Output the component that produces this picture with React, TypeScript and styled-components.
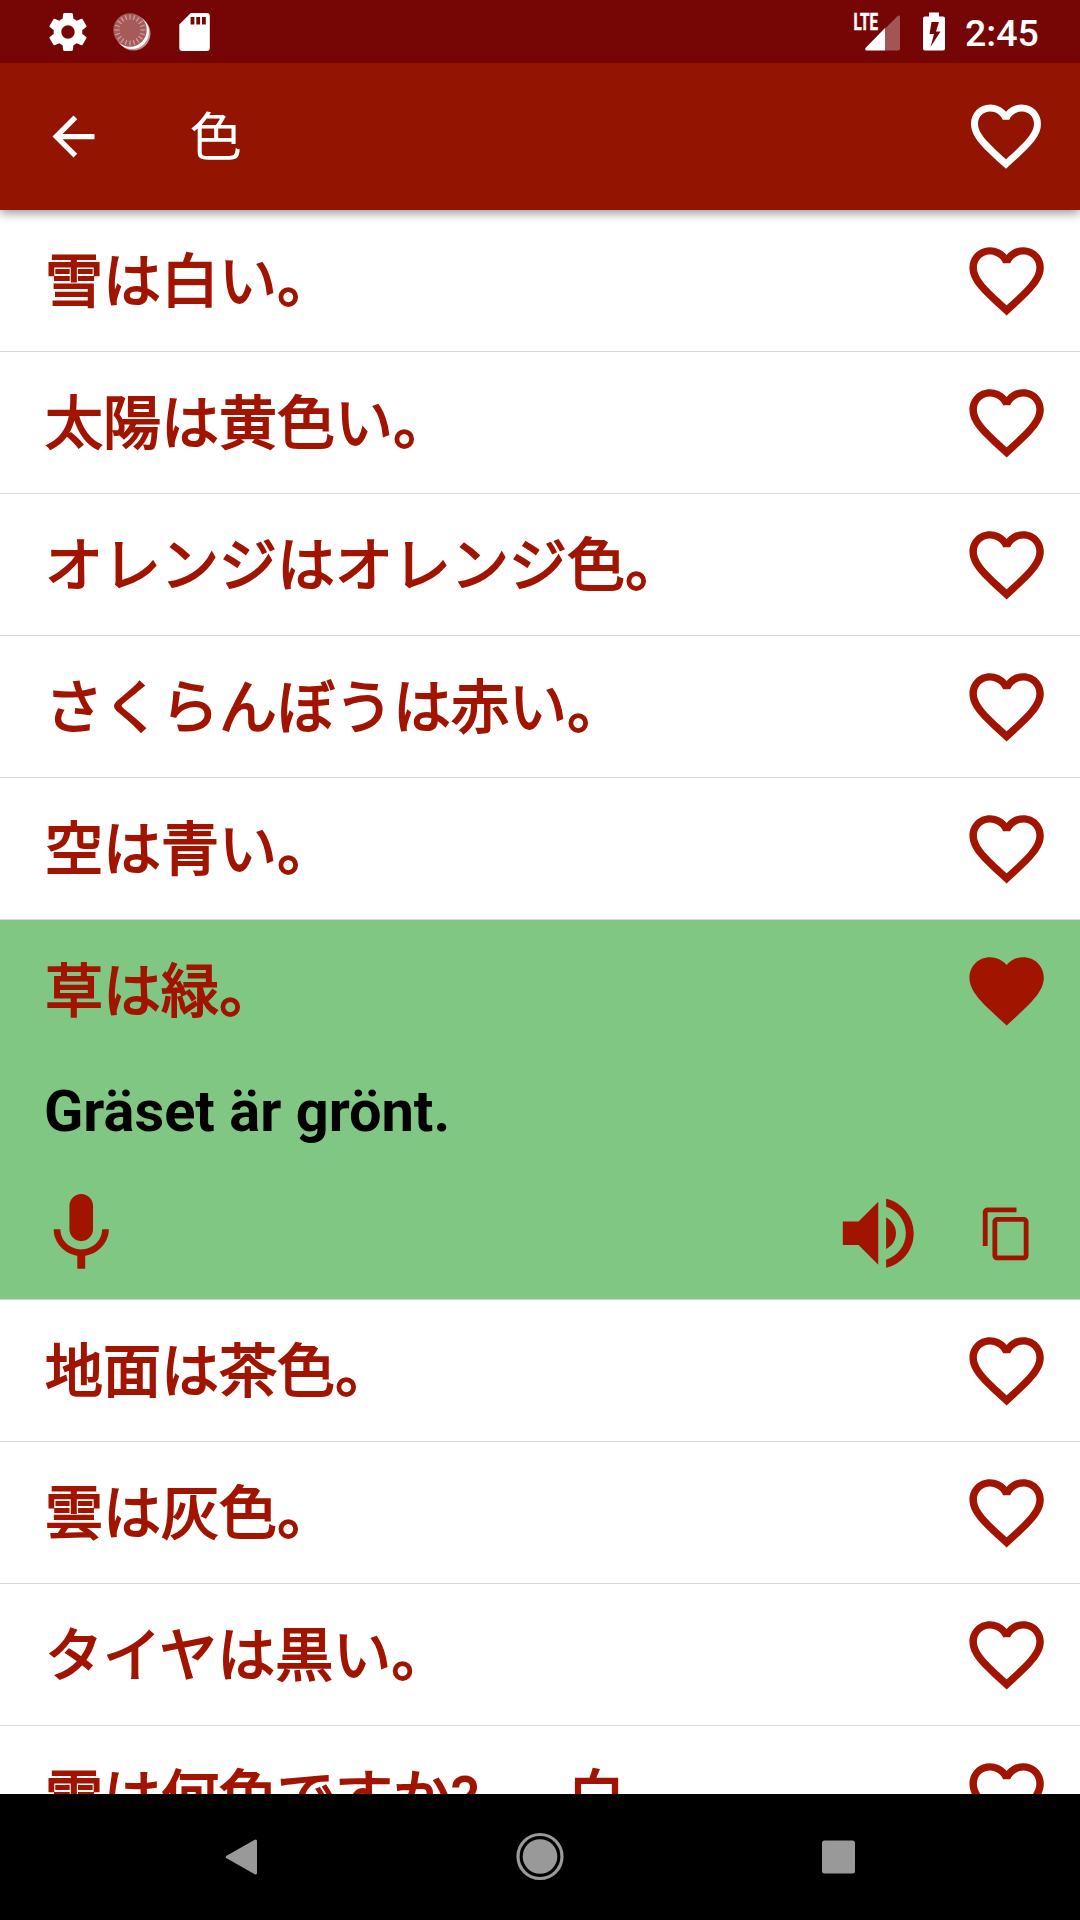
import React from "react";
import styled, { createGlobalStyle } from "styled-components";

const RED = "#a01400";

const GlobalStyle = createGlobalStyle`
  * { box-sizing: border-box; }
  html, body { margin: 0; padding: 0; background: #fff; }
  body { width: 1080px; height: 1920px; overflow: hidden; }
  svg { display: block; flex: none; overflow: visible; }
`;

const Screen = styled.div`
  width: 1080px;
  height: 1920px;
  display: flex;
  flex-direction: column;
  overflow: hidden;
  background: #fff;
  font-family: Roboto, "Noto Sans CJK JP", sans-serif;
`;

const StatusBar = styled.header`
  flex: none;
  height: 63px;
  padding: 0 41px 0 48px;
  display: flex;
  align-items: center;
  justify-content: space-between;
  background: #760606;
  color: #fff;
  z-index: 2;
`;

const StatusLeft = styled.div`
  display: flex;
  align-items: center;
  gap: 25px;
`;

const StatusRight = styled.div`
  display: flex;
  align-items: center;
`;

const Clock = styled.span`
  margin-left: 19px;
  width: 75px;
  padding: 2px 0 0 1px;
  font-size: 37.5px;
  font-weight: 500;
  line-height: 40px;
  white-space: nowrap;
`;

const AppBar = styled.div`
  flex: none;
  height: 147px;
  padding: 0 32px 1px 42px;
  display: flex;
  align-items: center;
  background: #931400;
  color: #fff;
  box-shadow: 0 3px 10px rgba(0, 0, 0, 0.42);
  z-index: 1;
`;

const Title = styled.h1`
  flex: 1;
  margin: 0 0 0 84.5px;
  padding-top: 4px;
  font-size: 52.5px;
  font-weight: 400;
  line-height: 76px;
`;

const List = styled.main`
  flex: 1;
  min-height: 0;
  overflow: hidden;
`;

const Item = styled.section<{ $active?: boolean }>`
  border-bottom: 1px solid #d6d6d6;
  background: ${(p) => (p.$active ? "#81c784" : "#fff")};
`;

const Phrase = styled.div`
  height: 141px;
  padding: 0 29px 0 45px;
  display: flex;
  align-items: center;
  justify-content: space-between;
  color: ${RED};
`;

const PhraseText = styled.span`
  padding-top: 2px;
  font-size: 58px;
  line-height: 84px;
  font-weight: 400;
  word-spacing: 1.2px;
  -webkit-text-stroke: 1.8px ${RED};
  white-space: pre;
`;

const Translation = styled.p`
  margin: 0;
  height: 100px;
  padding: 0 44px;
  color: #000;
  font-size: 57.75px;
  font-weight: 700;
  line-height: 100px;
`;

const Actions = styled.div`
  height: 138px;
  padding: 7px 44px 0 33.5px;
  display: flex;
  align-items: center;
  color: ${RED};
`;

const ActionGroup = styled.div`
  margin-left: auto;
  display: flex;
  align-items: center;
  gap: 53px;
`;

const NavBar = styled.nav`
  flex: none;
  height: 126px;
  padding: 0 1px 0 0;
  display: flex;
  align-items: center;
  justify-content: center;
  gap: 249px;
  background: #000;
`;

const HEART =
  "M12 21.35l-1.45-1.32C5.4 15.36 2 12.28 2 8.5 2 5.42 4.42 3 7.5 3c1.74 0 3.41.81 4.5 2.09C13.09 3.81 14.76 3 16.5 3 19.58 3 22 5.42 22 8.5c0 3.78-3.4 6.86-8.55 11.54L12 21.35z";
const HEART_OUTLINE =
  "M16.5 3c-1.74 0-3.41.81-4.5 2.09C10.91 3.81 9.24 3 7.5 3 4.42 3 2 5.42 2 8.5c0 3.78 3.4 6.86 8.55 11.54L12 21.35l1.45-1.32C18.6 15.36 22 12.28 22 8.5 22 5.42 19.58 3 16.5 3zm-4.4 15.55l-.1.1-.1-.1C7.14 14.24 4 11.39 4 8.5 4 6.5 5.5 5 7.5 5c1.54 0 3.04.99 3.57 2.36h1.87C13.46 5.99 14.96 5 16.5 5c2 0 3.5 1.5 3.5 3.5 0 2.89-3.14 5.74-7.9 10.05z";
const BACK = "M20 11H7.83l5.59-5.59L12 4l-8 8 8 8 1.41-1.41L7.83 13H20v-2z";
const MIC =
  "M12 14c1.66 0 2.99-1.34 2.99-3L15 5c0-1.66-1.34-3-3-3S9 3.34 9 5v6c0 1.66 1.34 3 3 3zm5.3-3c0 3-2.54 5.1-5.3 5.1S6.7 14 6.7 11H5c0 3.41 2.72 6.23 6 6.72V21h2v-3.28c3.28-.48 6-3.3 6-6.72h-1.7z";
const VOLUME =
  "M3 9v6h4l5 5V4L7 9H3zm13.5 3c0-1.77-1.02-3.29-2.5-4.03v8.05c1.48-.73 2.5-2.25 2.5-4.02zM14 3.23v2.06c2.89.86 5 3.54 5 6.71s-2.11 5.85-5 6.71v2.06c4.01-.91 7-4.49 7-8.77s-2.99-7.86-7-8.77z";
const COPY =
  "M16 1H4c-1.1 0-2 .9-2 2v14h2V3h12V1zm3 4H8c-1.1 0-2 .9-2 2v14c0 1.1.9 2 2 2h11c1.1 0 2-.9 2-2V7c0-1.1-.9-2-2-2zm0 16H8V7h11v14z";
const GEAR =
  "M19.43 12.98c.04-.32.07-.64.07-.98s-.03-.66-.07-.98l2.11-1.65c.19-.15.24-.42.12-.64l-2-3.46c-.12-.22-.39-.3-.61-.22l-2.49 1c-.52-.4-1.08-.73-1.69-.98l-.38-2.65C14.46 2.18 14.25 2 14 2h-4c-.25 0-.46.18-.49.42l-.38 2.65c-.61.25-1.17.59-1.69.98l-2.49-1c-.23-.09-.49 0-.61.22l-2 3.46c-.13.22-.07.49.12.64l2.11 1.65c-.04.32-.07.65-.07.98s.03.66.07.98l-2.11 1.65c-.19.15-.24.42-.12.64l2 3.46c.12.22.39.3.61.22l2.49-1c.52.4 1.08.73 1.69.98l.38 2.65c.03.24.24.42.49.42h4c.25 0 .46-.18.49-.42l.38-2.65c.61-.25 1.17-.59 1.69-.98l2.49 1c.23.09.49 0 .61-.22l2-3.46c.12-.22.07-.49-.12-.64l-2.11-1.65zM12 15.5c-1.93 0-3.5-1.57-3.5-3.5s1.57-3.5 3.5-3.5 3.5 1.57 3.5 3.5-1.57 3.5-3.5 3.5z";

function Icon({ d, size }: { d: string; size: number }) {
  return (
    <svg width={size} height={size} viewBox="0 0 24 24" fill="currentColor">
      <path d={d} />
    </svg>
  );
}

function Spinner() {
  const ticks = Array.from({ length: 20 }, (_, i) => i * 18);
  return (
    <svg width="38" height="38" viewBox="0 0 38 38">
      <circle cx="20.5" cy="20.5" r="17" fill="#c78f8f" />
      <circle cx="19" cy="19" r="17" fill="#fff" />
      <circle cx="17" cy="17" r="16.7" fill="#a65a5a" />
      {ticks.map((a) => (
        <path
          key={a}
          d="M17 1.5v5"
          stroke="#cb9c9c"
          strokeWidth="1.3"
          transform={`rotate(${a} 17 17)`}
        />
      ))}
    </svg>
  );
}

const before = ["雪は白い。", "太陽は黄色い。", "オレンジはオレンジ色。", "さくらんぼうは赤い。", "空は青い。"];
const after = ["地面は茶色。", "雲は灰色。", "タイヤは黒い。", "雪は何色ですか?  　白。"];

function PhraseRow({ text, liked }: { text: string; liked?: boolean }) {
  return (
    <Phrase>
      <PhraseText lang="ja">{text}</PhraseText>
      <Icon d={liked ? HEART : HEART_OUTLINE} size={89.25} />
    </Phrase>
  );
}

export default function App() {
  return (
    <Screen>
      <GlobalStyle />
      <StatusBar>
        <StatusLeft>
          <svg width="40" height="40" viewBox="1.5 1.5 21 21" fill="currentColor">
            <path d={GEAR} />
          </svg>
          <Spinner />
          <svg width="34" height="38" viewBox="-3.3 0 34 38">
            <path
              fill="#fff"
              fillRule="evenodd"
              d="M11.5 0H27.5a3 3 0 0 1 3 3V35a3 3 0 0 1-3 3H3a3 3 0 0 1-3-3V11.5zM11.3 4v7.5h3.8V4zm5.7 0v7.5h3.8V4zm5.7 0v7.5h3.8V4z"
            />
          </svg>
        </StatusLeft>
        <StatusRight>
          <svg width="46" height="40" viewBox="0 0 46 40">
            <path fill="#a35454" d="M31 16.5L43.5 4.2Q46 2.5 46 5V36.5a2 2 0 0 1-2 2H31z" />
            <path fill="#fff" d="M31 16V38.5H12.5Q10.5 38 11.5 36z" />
            <text
              x="-0.5"
              y="18.3"
              fontFamily="Roboto"
              fontWeight="700"
              fontSize="23"
              textLength="24.5"
              lengthAdjust="spacingAndGlyphs"
              fill="#fff"
              stroke="#fff"
              strokeWidth="0.5"
            >
              LTE
            </text>
          </svg>
          <svg width="45" height="40" viewBox="-23 -0.5 45 40">
            <path
              fill="#fff"
              fillRule="evenodd"
              d="M6 0h10v4h4a2 2 0 0 1 2 2v30a2 2 0 0 1-2 2H2a2 2 0 0 1-2-2V6a2 2 0 0 1 2-2h4zM8.5 9.500L6.5 21.5h4.5L7.5 34.5 17.5 19H13l3-9.500z"
            />
          </svg>
          <Clock>2:45</Clock>
        </StatusRight>
      </StatusBar>
      <AppBar>
        <Icon d={BACK} size={63} />
        <Title lang="ja">色</Title>
        <Icon d={HEART_OUTLINE} size={84} />
      </AppBar>
      <List>
        {before.map((t) => (
          <Item key={t}>
            <PhraseRow text={t} />
          </Item>
        ))}
        <Item $active>
          <PhraseRow text="草は緑。" liked />
          <Translation lang="sv">Gräset är grönt.</Translation>
          <Actions>
            <Icon d={MIC} size={94.5} />
            <ActionGroup>
              <Icon d={VOLUME} size={94.5} />
              <Icon d={COPY} size={57.75} />
            </ActionGroup>
          </Actions>
        </Item>
        {after.map((t) => (
          <Item key={t}>
            <PhraseRow text={t} />
          </Item>
        ))}
      </List>
      <NavBar>
        <svg width="50" height="50" viewBox="0 0 50 50">
          <path d="M11.3 25L39.5 9V41z" fill="#999" stroke="#999" strokeWidth="3" strokeLinejoin="round" />
        </svg>
        <svg width="50" height="50" viewBox="0 0 50 50">
          <circle cx="25" cy="24.5" r="22" fill="none" stroke="#999" strokeWidth="3.2" />
          <circle cx="25" cy="24.5" r="17.3" fill="#999" />
        </svg>
        <svg width="50" height="50" viewBox="0 0 50 50">
          <rect x="8" y="8.5" width="33" height="33" rx="2.5" fill="#999" />
        </svg>
      </NavBar>
    </Screen>
  );
}
